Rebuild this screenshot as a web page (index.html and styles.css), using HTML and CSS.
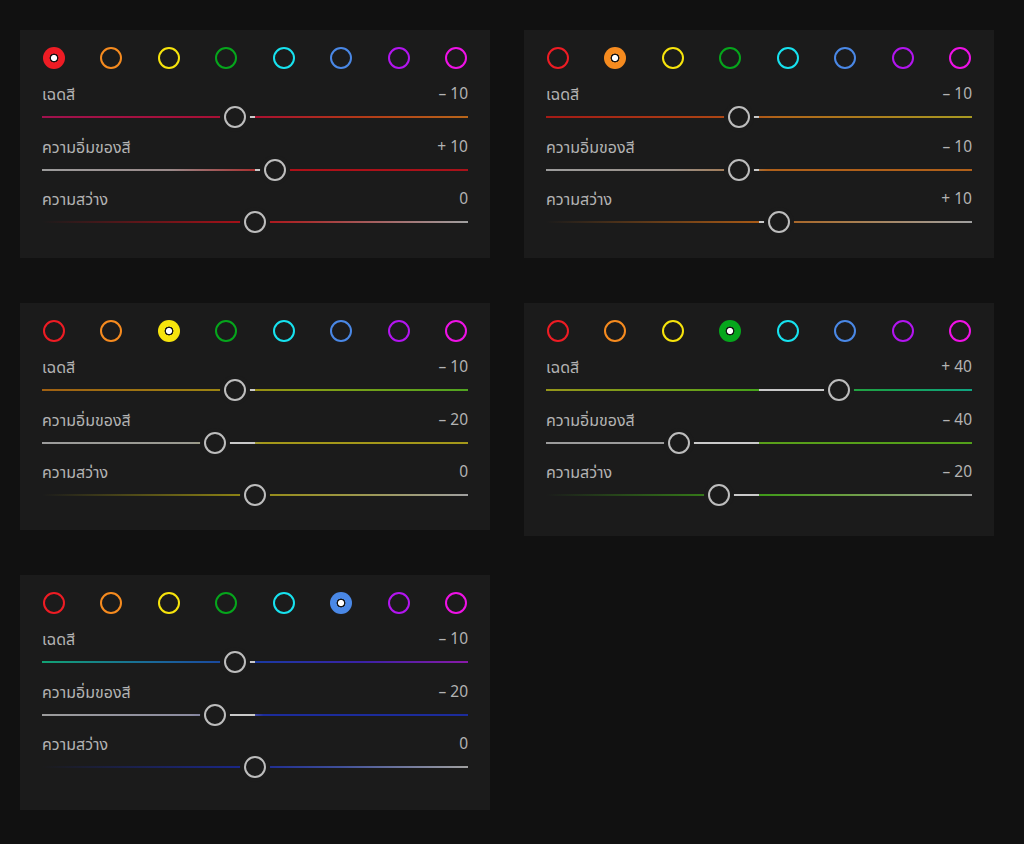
FILE: index.html
```html
<!DOCTYPE html>
<html lang="th">
<head>
<meta charset="utf-8">
<title>HSL</title>
<link rel="stylesheet" href="styles.css">
</head>
<body>
<main class="page">
  <div class="column">
    <!-- Red -->
    <section class="panel h-228">
      <div class="swatches">
        <span class="sw red sel"></span><span class="sw orange"></span><span class="sw yellow"></span><span class="sw green"></span><span class="sw cyan"></span><span class="sw blue"></span><span class="sw purple"></span><span class="sw magenta"></span>
      </div>
      <div class="sliders">
        <div class="slider" style="--v:-10">
          <div class="row"><span class="label">เฉดสี</span><span class="value">– 10</span></div>
          <div class="track-wrap"><div class="track hue-red"></div><div class="hl"></div><div class="thumb"></div></div>
        </div>
        <div class="slider" style="--v:10">
          <div class="row"><span class="label">ความอิ่มของสี</span><span class="value">+ 10</span></div>
          <div class="track-wrap"><div class="track sat-red"></div><div class="hl"></div><div class="thumb"></div></div>
        </div>
        <div class="slider" style="--v:0">
          <div class="row"><span class="label">ความสว่าง</span><span class="value">0</span></div>
          <div class="track-wrap"><div class="track lum-red"></div><div class="hl"></div><div class="thumb"></div></div>
        </div>
      </div>
    </section>

    <!-- Yellow -->
    <section class="panel h-227">
      <div class="swatches">
        <span class="sw red"></span><span class="sw orange"></span><span class="sw yellow sel"></span><span class="sw green"></span><span class="sw cyan"></span><span class="sw blue"></span><span class="sw purple"></span><span class="sw magenta"></span>
      </div>
      <div class="sliders">
        <div class="slider" style="--v:-10">
          <div class="row"><span class="label">เฉดสี</span><span class="value">– 10</span></div>
          <div class="track-wrap"><div class="track hue-yellow"></div><div class="hl"></div><div class="thumb"></div></div>
        </div>
        <div class="slider" style="--v:-20">
          <div class="row"><span class="label">ความอิ่มของสี</span><span class="value">– 20</span></div>
          <div class="track-wrap"><div class="track sat-yellow"></div><div class="hl"></div><div class="thumb"></div></div>
        </div>
        <div class="slider" style="--v:0">
          <div class="row"><span class="label">ความสว่าง</span><span class="value">0</span></div>
          <div class="track-wrap"><div class="track lum-yellow"></div><div class="hl"></div><div class="thumb"></div></div>
        </div>
      </div>
    </section>

    <!-- Blue -->
    <section class="panel h-235">
      <div class="swatches">
        <span class="sw red"></span><span class="sw orange"></span><span class="sw yellow"></span><span class="sw green"></span><span class="sw cyan"></span><span class="sw blue sel"></span><span class="sw purple"></span><span class="sw magenta"></span>
      </div>
      <div class="sliders">
        <div class="slider" style="--v:-10">
          <div class="row"><span class="label">เฉดสี</span><span class="value">– 10</span></div>
          <div class="track-wrap"><div class="track hue-blue"></div><div class="hl"></div><div class="thumb"></div></div>
        </div>
        <div class="slider" style="--v:-20">
          <div class="row"><span class="label">ความอิ่มของสี</span><span class="value">– 20</span></div>
          <div class="track-wrap"><div class="track sat-blue"></div><div class="hl"></div><div class="thumb"></div></div>
        </div>
        <div class="slider" style="--v:0">
          <div class="row"><span class="label">ความสว่าง</span><span class="value">0</span></div>
          <div class="track-wrap"><div class="track lum-blue"></div><div class="hl"></div><div class="thumb"></div></div>
        </div>
      </div>
    </section>
  </div>

  <div class="column">
    <!-- Orange -->
    <section class="panel h-228">
      <div class="swatches">
        <span class="sw red"></span><span class="sw orange sel"></span><span class="sw yellow"></span><span class="sw green"></span><span class="sw cyan"></span><span class="sw blue"></span><span class="sw purple"></span><span class="sw magenta"></span>
      </div>
      <div class="sliders">
        <div class="slider" style="--v:-10">
          <div class="row"><span class="label">เฉดสี</span><span class="value">– 10</span></div>
          <div class="track-wrap"><div class="track hue-orange"></div><div class="hl"></div><div class="thumb"></div></div>
        </div>
        <div class="slider" style="--v:-10">
          <div class="row"><span class="label">ความอิ่มของสี</span><span class="value">– 10</span></div>
          <div class="track-wrap"><div class="track sat-orange"></div><div class="hl"></div><div class="thumb"></div></div>
        </div>
        <div class="slider" style="--v:10">
          <div class="row"><span class="label">ความสว่าง</span><span class="value">+ 10</span></div>
          <div class="track-wrap"><div class="track lum-orange"></div><div class="hl"></div><div class="thumb"></div></div>
        </div>
      </div>
    </section>

    <!-- Green -->
    <section class="panel h-233">
      <div class="swatches">
        <span class="sw red"></span><span class="sw orange"></span><span class="sw yellow"></span><span class="sw green sel"></span><span class="sw cyan"></span><span class="sw blue"></span><span class="sw purple"></span><span class="sw magenta"></span>
      </div>
      <div class="sliders">
        <div class="slider" style="--v:40">
          <div class="row"><span class="label">เฉดสี</span><span class="value">+ 40</span></div>
          <div class="track-wrap"><div class="track hue-green"></div><div class="hl"></div><div class="thumb"></div></div>
        </div>
        <div class="slider" style="--v:-40">
          <div class="row"><span class="label">ความอิ่มของสี</span><span class="value">– 40</span></div>
          <div class="track-wrap"><div class="track sat-green"></div><div class="hl"></div><div class="thumb"></div></div>
        </div>
        <div class="slider" style="--v:-20">
          <div class="row"><span class="label">ความสว่าง</span><span class="value">– 20</span></div>
          <div class="track-wrap"><div class="track lum-green"></div><div class="hl"></div><div class="thumb"></div></div>
        </div>
      </div>
    </section>
  </div>
</main>
</body>
</html>
```

FILE: styles.css
```css
html, body {
  margin: 0;
  padding: 0;
  background: #111111;
}

body {
  width: 1024px;
  height: 844px;
  overflow: hidden;
  font-family: "Noto Sans Thai", "Noto Sans", "DejaVu Sans", sans-serif;
  color: #b4b4b4;
}

.page {
  display: flex;
  gap: 34px;
  padding: 30px 0 0 20px;
  align-items: flex-start;
}

.column {
  display: flex;
  flex-direction: column;
  gap: 45px;
  width: 470px;
}

.panel {
  background: #1b1b1b;
  box-sizing: border-box;
  padding: 17px 22px 0 22px;
}

.h-227 { height: 227px; }
.h-228 { height: 228px; }
.h-233 { height: 233px; }
.h-235 { height: 235px; }

/* colour swatches */
.swatches {
  display: flex;
  justify-content: space-between;
  padding: 0 1px;
  height: 22px;
}

.sw {
  width: 22px;
  height: 22px;
  box-sizing: border-box;
  border-radius: 50%;
  border: 2.5px solid var(--c);
}

.sw.sel {
  border: none;
  background: radial-gradient(circle, #ffffff 0 2.8px, rgba(0, 0, 0, 0.22) 3.2px 4.2px, var(--c) 4.7px);
}

.red { --c: #ee1c24; }
.orange { --c: #f68b1f; }
.yellow { --c: #f7e40c; }
.green { --c: #06a61c; }
.cyan { --c: #17e2ef; }
.blue { --c: #4a88e6; }
.purple { --c: #b315f0; }
.magenta { --c: #ef12e6; }

/* sliders */
.sliders {
  display: flex;
  flex-direction: column;
  gap: 9.5px;
  margin-top: 16px;
}

.row {
  display: flex;
  justify-content: space-between;
  align-items: center;
  height: 20px;
  line-height: 20px;
}

.label { color: #b3b3b3; font-size: 16px; }
.value { color: #b3b3b3; font-size: 15.5px; }

.track-wrap {
  position: relative;
  height: 22px;
  margin-top: 1px;
}

.track {
  position: absolute;
  left: 0;
  right: 0;
  top: 10px;
  height: 2px;
}

.hl {
  position: absolute;
  top: 10px;
  height: 2px;
  background: #c9c9c9;
  left: min(50%, calc(50% + var(--v) * 2px));
  width: max(calc(var(--v) * 2px), calc(var(--v) * -2px));
}

.thumb {
  position: absolute;
  top: 0;
  left: calc(50% + var(--v) * 2px - 11px);
  width: 22px;
  height: 22px;
  box-sizing: border-box;
  border-radius: 50%;
  border: 2.5px solid #bdbdbd;
  background: #1b1b1b;
  box-shadow: 0 0 0 4px #1b1b1b;
}

/* gradients */
.hue-red { background: linear-gradient(90deg, #a0124e 0%, #aa1030 50%, #b33a18 75%, #b8661a 100%); }
.sat-red { background: linear-gradient(90deg, #9c9c9c 0%, #9a8a8a 30%, #a83030 50%, #b01018 52%, #a8121a 100%); }
.lum-red { background: linear-gradient(90deg, rgba(176, 16, 24, 0) 0%, #b01018 50%, #a83030 62%, #a0a0a0 100%); }

.hue-orange { background: linear-gradient(90deg, #a51a16 0%, #ad4a14 45%, #b0661a 55%, #a89a22 100%); }
.sat-orange { background: linear-gradient(90deg, #9c9c9c 0%, #9a9088 30%, #a8703a 50%, #b0601a 52%, #b0601a 100%); }
.lum-orange { background: linear-gradient(90deg, rgba(176, 96, 26, 0) 0%, #a85a16 50%, #a87a48 70%, #a0a0a0 100%); }

.hue-yellow { background: linear-gradient(90deg, #a06012 0%, #9c8a12 48%, #8a9e14 60%, #50a420 100%); }
.sat-yellow { background: linear-gradient(90deg, #9c9c9c 0%, #9a9a90 35%, #a09a3a 50%, #a4981a 52%, #a4981a 100%); }
.lum-yellow { background: linear-gradient(90deg, rgba(150, 140, 20, 0) 0%, #958a14 50%, #9c9640 70%, #a0a0a0 100%); }

.hue-green { background: linear-gradient(90deg, #96961a 0%, #6aa01a 35%, #44a21a 50%, #18a250 80%, #10a482 100%); }
.sat-green { background: linear-gradient(90deg, #9c9c9c 0%, #9c9c9c 48%, #5aa01a 50%, #52a01a 100%); }
.lum-green { background: linear-gradient(90deg, rgba(60, 150, 20, 0) 0%, #3e9a18 50%, #6a9e40 70%, #a0a0a0 100%); }

.hue-blue { background: linear-gradient(90deg, #12a274 0%, #1a6a98 25%, #1a3aa2 50%, #3a22a6 75%, #8a1aa8 100%); }
.sat-blue { background: linear-gradient(90deg, #9c9c9c 0%, #8c8ca0 35%, #40489c 50%, #1c2c9c 52%, #1c2c9c 100%); }
.lum-blue { background: linear-gradient(90deg, rgba(26, 40, 144, 0) 0%, #1a2890 50%, #40509a 70%, #a0a0a0 100%); }
```
